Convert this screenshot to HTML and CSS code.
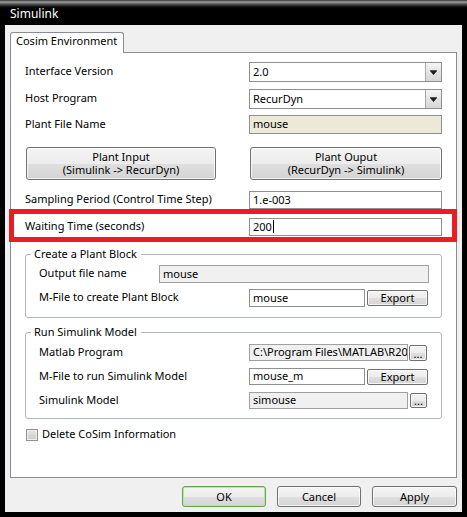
FILE: index.html
```html
<!DOCTYPE html>
<html>
<head>
<meta charset="utf-8">
<title>Simulink</title>
<link rel="stylesheet" href="styles.css">
</head>
<body>
<div class="window">
  <div class="titlebar">Simulink</div>
  <div class="client">
    <div class="tabs"><div class="tab">Cosim Environment</div></div>
    <div class="panel">
      <div class="row r1">
        <span class="label">Interface Version</span>
        <div class="combo ctl"><span class="val">2.0</span><span class="drop"><svg width="7" height="5" viewBox="0 0 7 5"><rect x="0" y="0" width="7" height="1" fill="#555"/><polygon points="0,1 7,1 3.5,5" fill="#1c1c1c"/></svg></span></div>
      </div>
      <div class="row r2">
        <span class="label">Host Program</span>
        <div class="combo ctl"><span class="val">RecurDyn</span><span class="drop"><svg width="7" height="5" viewBox="0 0 7 5"><rect x="0" y="0" width="7" height="1" fill="#555"/><polygon points="0,1 7,1 3.5,5" fill="#1c1c1c"/></svg></span></div>
      </div>
      <div class="row r3">
        <span class="label">Plant File Name</span>
        <div class="field beige ctl">mouse</div>
      </div>
      <div class="btnrow">
        <div class="btn big b1"><span>Plant Input</span><span>(Simulink -&gt; RecurDyn)</span></div>
        <div class="btn big b2"><span>Plant Ouput</span><span>(RecurDyn -&gt; Simulink)</span></div>
      </div>
      <div class="row r5">
        <span class="label">Sampling Period (Control Time Step)</span>
        <div class="field ctl">1.e-003</div>
      </div>
      <div class="row r6">
        <span class="label">Waiting Time (seconds)</span>
        <div class="field ctl">200<span class="caret"></span></div>
      </div>

      <fieldset class="group g1">
        <legend>Create a Plant Block</legend>
        <div class="grow gr-first">
          <span class="glabel short">Output file name</span>
          <div class="field gray fill">mouse</div>
        </div>
        <div class="grow">
          <span class="glabel">M-File to create Plant Block</span>
          <div class="field mid">mouse</div>
          <div class="btn small export">Export</div>
        </div>
      </fieldset>

      <fieldset class="group g2">
        <legend>Run Simulink Model</legend>
        <div class="grow g2row">
          <span class="glabel">Matlab Program</span>
          <div class="field gray wide">C:\Program Files\MATLAB\R20</div>
          <div class="btn small dots">...</div>
        </div>
        <div class="grow g2row">
          <span class="glabel">M-File to run Simulink Model</span>
          <div class="field mid">mouse_m</div>
          <div class="btn small export">Export</div>
        </div>
        <div class="grow g2row">
          <span class="glabel">Simulink Model</span>
          <div class="field gray wide">simouse</div>
          <div class="btn small dots d2">...</div>
        </div>
      </fieldset>

      <div class="checkrow">
        <span class="check"></span>
        <span class="checktext">Delete CoSim Information</span>
      </div>
    </div>
    <div class="footer">
      <div class="btn foot ok">OK</div>
      <div class="btn foot">Cancel</div>
      <div class="btn foot apply">Apply</div>
    </div>
  </div>
  <div class="highlight"></div>
</div>
</body>
</html>
```

FILE: styles.css
```css
* { box-sizing: border-box; }
html, body { margin: 0; padding: 0; }
body {
  width: 467px;
  height: 517px;
  overflow: hidden;
  background: #000;
  font-family: "Noto Sans", "Open Sans", sans-serif;
  font-size: 11px;
  color: #000;
}
.window {
  position: relative;
  width: 467px;
  height: 517px;
  background: #000;
  display: flex;
  flex-direction: column;
  padding: 0 5px 5px;
}
.titlebar {
  height: 25px;
  margin: 0 -5px;
  padding: 3px 10px 0;
  line-height: 22px;
  font-size: 12px;
  color: #fff;
  background: linear-gradient(#303030 0px, #a0a0a0 2px, #555 4px, #0a0a0a 7px, #000 9px);
}
.client {
  flex: 1;
  background: #f0f0f0;
  padding: 7px 5px 5px;
  display: flex;
  flex-direction: column;
}
.tabs { display: flex; height: 20px; }
.tab {
  position: relative;
  z-index: 1;
  width: 114px;
  height: 21px;
  border: 1px solid #898c95;
  border-bottom: none;
  border-radius: 3px 3px 0 0;
  background: #fff;
  padding-left: 5px;
  line-height: 16px;
  white-space: nowrap;
}
.panel {
  height: 426px;
  border: 1px solid #898c95;
  background: #fff;
  padding: 9px 14px 0;
  display: flex;
  flex-direction: column;
}
.row { display: flex; align-items: center; }
.label { width: 224px; white-space: nowrap; padding-bottom: 3px; }
.ctl { width: 193px; height: 100%; }
.r1 { height: 20px; }
.r2 { height: 20px; margin-top: 7px; }
.r3 { height: 19px; margin-top: 6px; }
.r5 { height: 18px; margin-top: 11px; }
.r6 { height: 18px; margin-top: 9px; }

.field {
  border: 1px solid #8e8f8f;
  background: #fff;
  padding: 0 3px 2px;
  display: flex;
  align-items: center;
  white-space: nowrap;
  overflow: hidden;
}
.field.beige { background: #ece9d8; }
.field.gray { background: #f0f0f0; border-color: #a0a0a0; }
.caret { display: inline-block; width: 1px; height: 13px; background: #000; margin-left: 1px; }

.combo {
  display: flex;
  border: 1px solid #8e8f8f;
  background: #fff;
}
.combo .val { flex: 1; padding: 0 0 2px 3px; display: flex; align-items: center; }
.combo .drop {
  width: 16px;
  border-left: 1px solid #a8a8a8;
  background: linear-gradient(#f6f6f6, #e4e4e4 50%, #d6d6d6);
  display: flex;
  align-items: center;
  justify-content: center;
}

.btn {
  border: 1px solid #707070;
  border-radius: 3px;
  background: linear-gradient(#f4f4f4 0%, #ececec 50%, #dfdfdf 51%, #d4d4d4 100%);
  box-shadow: inset 0 0 0 1px rgba(255,255,255,0.75);
  display: flex;
  flex-direction: column;
  align-items: center;
  justify-content: center;
  white-space: nowrap;
}
.btnrow { display: flex; height: 33px; margin-top: 13px; }
.big { line-height: 13px; padding-bottom: 2px; }
.b1 { width: 190px; margin-left: 1px; }
.b2 { width: 192px; margin-left: 34px; }

.group {
  margin: 0;
  border: 1px solid #b0b5ba;
  border-radius: 3px;
  padding: 0 12px 10px 13px;
  min-width: 0;
}
.group legend {
  padding: 0 4px 2px 3px;
  margin-left: -8px;
  line-height: 13px;
}
.g1 { margin-top: 11px; padding-top: 3px; }
.g2 { margin-top: 7px; padding-top: 4px; padding-bottom: 9px; }
.grow { display: flex; align-items: center; height: 18px; margin-top: 6px; }
.grow.gr-first { margin-top: 0; }
.g2row { height: 17px; margin-top: 7px; }
.g2row:first-of-type { margin-top: 0; }
.glabel { width: 210px; white-space: nowrap; padding-bottom: 3px; }
.glabel.short { width: 120px; }
.field.fill { flex: 1; height: 100%; }
.field.mid { width: 116px; height: 100%; }
.field.wide { width: 159px; height: 100%; }
.small { border-radius: 2px; padding-bottom: 1px; }
.export { width: 61px; height: 16px; margin-left: 2px; }
.dots { width: 18px; height: 16px; margin-left: 1px; justify-content: flex-end; line-height: 11px; padding-bottom: 1px; }
.dots.d2 { height: 15px; margin-left: 2px; width: 17px; }

.checkrow { display: flex; align-items: center; height: 13px; margin-top: 9px; }
.checktext { padding-bottom: 2px; }
.check {
  width: 12px;
  height: 12px;
  margin-left: 1px;
  margin-right: 4px;
  border: 1px solid #8f8f8f;
  background: linear-gradient(#e6e6e6, #c8c8c8);
  box-shadow: inset 0 0 0 1px #f2f2f2;
}

.footer { display: flex; justify-content: flex-end; gap: 11px; height: 21px; margin-top: 8px; }
.foot { width: 84px; padding-bottom: 1px; }
.foot.apply { width: 85px; }
.foot.ok { border-color: #62a744; box-shadow: inset 0 0 0 1px #bfe3a8; }

.highlight {
  position: absolute;
  left: 9px;
  top: 209px;
  width: 448px;
  height: 33px;
  border: 5px solid #ec1c24;
}
```
